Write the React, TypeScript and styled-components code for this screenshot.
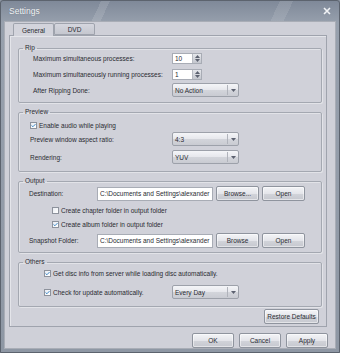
import styled, { createGlobalStyle } from "styled-components";

// === GLOBAL ===

const GlobalStyle = createGlobalStyle`
  html, body {
    margin: 0;
    padding: 0;
    background: #8c95a2;
  }
  * {
    box-sizing: border-box;
  }
  body {
    font-family: "Liberation Sans", Arial, sans-serif;
    font-size: 6.5px;
    color: #2a2b31;
  }
`;

// === WINDOW CHROME ===

const Window = styled.div`
  width: 340px;
  height: 353px;
  display: flex;
  flex-direction: column;
  background: linear-gradient(180deg, #7f8999 0px, #97a0ad 22px, #8e97a4 100%);
  border: 1px solid #5c636e;
  border-radius: 3px 3px 0 0;
  padding: 0 3px 3px 3px;
`;

const TitleBar = styled.div`
  height: 20px;
  flex: none;
  display: flex;
  align-items: center;
  justify-content: space-between;
  padding: 0 5px 1px 5px;
  background: linear-gradient(
    115deg,
    transparent 0 88px,
    rgba(255, 255, 255, 0.12) 88px 96px,
    transparent 96px 250px,
    rgba(255, 255, 255, 0.1) 250px 262px,
    transparent 262px
  );
`;

const TitleText = styled.span`
  color: #f4f6f9;
  font-size: 8.5px;
  text-shadow: 0 0 1px rgba(0, 0, 0, 0.3);
`;

const CloseIcon = styled.svg`
  width: 8px;
  height: 8px;
`;

const Client = styled.div`
  flex: 1;
  display: flex;
  flex-direction: column;
  background: #cfd0d8;
  border: 1px solid #a9adb6;
  padding: 0 8px 0 4px;
`;

// === TABS ===

const TabStrip = styled.div`
  display: flex;
  padding-left: 4px;
  height: 13px;
  align-items: flex-end;
`;

const Tab = styled.div<{ $active?: boolean }>`
  width: 41px;
  height: ${(p) => (p.$active ? 13 : 12)}px;
  display: flex;
  align-items: center;
  justify-content: center;
  border: 1px solid #9fa3ad;
  border-bottom: ${(p) => (p.$active ? "none" : "1px solid #9fa3ad")};
  border-radius: 2px 2px 0 0;
  margin-bottom: ${(p) => (p.$active ? -1 : 0)}px;
  background: ${(p) =>
    p.$active ? "#d3d4dc" : "linear-gradient(180deg, #d5d6de, #c5c7cf)"};
  position: relative;
  z-index: ${(p) => (p.$active ? 1 : 0)};
`;

const Panel = styled.div`
  height: 292px;
  display: flex;
  flex-direction: column;
  border: 1px solid #9fa3ad;
  box-shadow: inset 1px 1px 0 #e4e5ea;
  background: #d0d1d9;
  padding: 8px 4px 0 8px;
  gap: 5px;
`;

// === GROUPS ===

const Group = styled.fieldset<{ $h: number }>`
  margin: 0;
  height: ${(p) => p.$h}px;
  flex: none;
  border: 1px solid #a4a8b1;
  border-radius: 2px;
  box-shadow: inset 1px 1px 0 #e2e3e8, 1px 1px 0 #e2e3e8;
  padding: 0;
  min-width: 0;
  display: flex;
  flex-direction: column;
`;

const Legend = styled.legend`
  padding: 0 2px;
  margin-left: 4px;
  line-height: 8px;
`;

const Rows = styled.div<{ $left: number }>`
  display: flex;
  flex-direction: column;
  padding-left: ${(p) => p.$left}px;
`;

const Row = styled.div<{ $label?: number; $h?: number; $mt?: number }>`
  display: grid;
  grid-template-columns: ${(p) => (p.$label ? `${p.$label}px auto` : "auto")};
  align-items: center;
  justify-content: start;
  height: ${(p) => p.$h || 14}px;
  margin-top: ${(p) => p.$mt || 0}px;
`;

const Controls = styled.div`
  display: flex;
  align-items: center;
  gap: 3px;
`;

// === CONTROLS ===

const Spin = styled.div`
  width: 30px;
  height: 11px;
  display: flex;
  background: #fff;
  border: 1px solid #a8acb5;
`;

const SpinText = styled.span`
  flex: 1;
  padding-left: 2px;
  line-height: 9px;
`;

const SpinButtons = styled.div`
  width: 9px;
  display: flex;
  flex-direction: column;
  align-items: center;
  justify-content: center;
  gap: 1px;
  background: linear-gradient(180deg, #e4e6eb, #c4c7ce);
  border-left: 1px solid #b7bac2;
`;

const Select = styled.div`
  width: 67px;
  height: 14px;
  display: flex;
  align-items: center;
  border: 1px solid #9da1aa;
  border-radius: 2px;
  background: linear-gradient(180deg, #f4f5f8 0%, #e6e7ec 50%, #d3d5db 51%, #c9cbd2 100%);
`;

const SelectText = styled.span`
  flex: 1;
  padding-left: 2px;
`;

const SelectArrow = styled.div`
  width: 11px;
  height: 10px;
  display: flex;
  align-items: center;
  justify-content: center;
  border-left: 1px solid #b0b3bb;
`;

const PathInput = styled.div`
  width: 116px;
  height: 14px;
  display: flex;
  align-items: center;
  padding-left: 2px;
  background: #fff;
  border: 1px solid #a8acb5;
  white-space: nowrap;
  overflow: hidden;
`;

const Button = styled.div<{ $w: number }>`
  width: ${(p) => p.$w}px;
  height: 15px;
  flex: none;
  display: flex;
  align-items: center;
  justify-content: center;
  border: 1px solid #8f949e;
  border-radius: 2px;
  background: linear-gradient(180deg, #f3f4f7 0%, #e4e5ea 50%, #d2d4da 51%, #c6c8cf 100%);
  box-shadow: inset 0 0 0 1px rgba(255, 255, 255, 0.5);
`;

const CheckRow = styled.label<{ $indent?: number; $mt?: number }>`
  display: flex;
  align-items: center;
  gap: 2px;
  height: 14px;
  margin-top: ${(p) => p.$mt || 0}px;
  padding-left: ${(p) => p.$indent || 0}px;
`;

const Box = styled.span`
  width: 7px;
  height: 7px;
  flex: none;
  display: flex;
  align-items: center;
  justify-content: center;
  background: linear-gradient(135deg, #e9ecf2, #ffffff);
  border: 1px solid #8d929c;
`;

const RestoreRow = styled.div`
  display: flex;
  justify-content: flex-end;
  padding-right: 3px;
  margin-top: -3px;
`;

const Footer = styled.div`
  display: flex;
  justify-content: flex-end;
  gap: 5px;
  padding-top: 6px;
  margin-right: -1px;
`;

// === PIECES ===

function Arrow() {
  return (
    <svg width="5" height="3" viewBox="0 0 5 3">
      <path d="M0 0 H5 L2.5 3 Z" fill="#5c6170" />
    </svg>
  );
}

function SpinBox({ value }: { value: string }) {
  return (
    <Spin>
      <SpinText>{value}</SpinText>
      <SpinButtons>
        <svg width="5" height="3" viewBox="0 0 5 3">
          <path d="M0 3 H5 L2.5 0 Z" fill="#5c6170" />
        </svg>
        <Arrow />
      </SpinButtons>
    </Spin>
  );
}

function Dropdown({ value }: { value: string }) {
  return (
    <Select>
      <SelectText>{value}</SelectText>
      <SelectArrow>
        <Arrow />
      </SelectArrow>
    </Select>
  );
}

function Check({ checked }: { checked?: boolean }) {
  return (
    <Box>
      {checked && (
        <svg width="6" height="5" viewBox="0 0 6 5">
          <path d="M0.6 2.4 L2.3 4 L5.4 0.8" stroke="#3a86c6" strokeWidth="1.2" fill="none" />
        </svg>
      )}
    </Box>
  );
}

// === APP ===

export default function App() {
  return (
    <>
      <GlobalStyle />
      <Window>
        <TitleBar>
          <TitleText>Settings</TitleText>
          <CloseIcon viewBox="0 0 8 8">
            <path d="M1 1 L7 7 M7 1 L1 7" stroke="#f1f3f6" strokeWidth="1.6" />
          </CloseIcon>
        </TitleBar>
        <Client>
          <TabStrip>
            <Tab $active>General</Tab>
            <Tab>DVD</Tab>
          </TabStrip>
          <Panel>
            <Group $h={59}>
              <Legend>Rip</Legend>
              <Rows $left={14}>
                <Row $label={139} $h={16} $mt={-2}>
                  <span>Maximum simultaneous processes:</span>
                  <SpinBox value="10" />
                </Row>
                <Row $label={139} $h={16}>
                  <span>Maximum simultaneously running processes:</span>
                  <SpinBox value="1" />
                </Row>
                <Row $label={139} $h={16}>
                  <span>After Ripping Done:</span>
                  <Dropdown value="No Action" />
                </Row>
              </Rows>
            </Group>

            <Group $h={64}>
              <Legend>Preview</Legend>
              <Rows $left={11}>
                <CheckRow $mt={2}>
                  <Check checked />
                  <span>Enable audio while playing</span>
                </CheckRow>
                <Row $label={142}>
                  <span>Preview window aspect ratio:</span>
                  <Dropdown value="4:3" />
                </Row>
                <Row $label={142} $mt={4}>
                  <span>Rendering:</span>
                  <Dropdown value="YUV" />
                </Row>
              </Rows>
            </Group>

            <Group $h={76}>
              <Legend>Output</Legend>
              <Rows $left={10}>
                <Row $label={68} $h={15} $mt={1}>
                  <span>Destination:</span>
                  <Controls>
                    <PathInput>C:\Documents and Settings\alexander</PathInput>
                    <Button $w={43}>Browse...</Button>
                    <Button $w={43}>Open</Button>
                  </Controls>
                </Row>
                <CheckRow $indent={23} $mt={2}>
                  <Check />
                  <span>Create chapter folder in output folder</span>
                </CheckRow>
                <CheckRow $indent={23}>
                  <Check checked />
                  <span>Create album folder in output folder</span>
                </CheckRow>
                <Row $label={68} $h={15} $mt={2}>
                  <span>Snapshot Folder:</span>
                  <Controls>
                    <PathInput>C:\Documents and Settings\alexander</PathInput>
                    <Button $w={43}>Browse</Button>
                    <Button $w={43}>Open</Button>
                  </Controls>
                </Row>
              </Rows>
            </Group>

            <Group $h={49}>
              <Legend>Others</Legend>
              <Rows $left={25}>
                <CheckRow>
                  <Check checked />
                  <span>Get disc info from server while loading disc automatically.</span>
                </CheckRow>
                <Row $label={128} $mt={5}>
                  <CheckRow>
                    <Check checked />
                    <span>Check for update automatically.</span>
                  </CheckRow>
                  <Dropdown value="Every Day" />
                </Row>
              </Rows>
            </Group>

            <RestoreRow>
              <Button $w={55}>Restore Defaults</Button>
            </RestoreRow>
          </Panel>
          <Footer>
            <Button $w={42}>OK</Button>
            <Button $w={42}>Cancel</Button>
            <Button $w={42}>Apply</Button>
          </Footer>
        </Client>
      </Window>
    </>
  );
}
